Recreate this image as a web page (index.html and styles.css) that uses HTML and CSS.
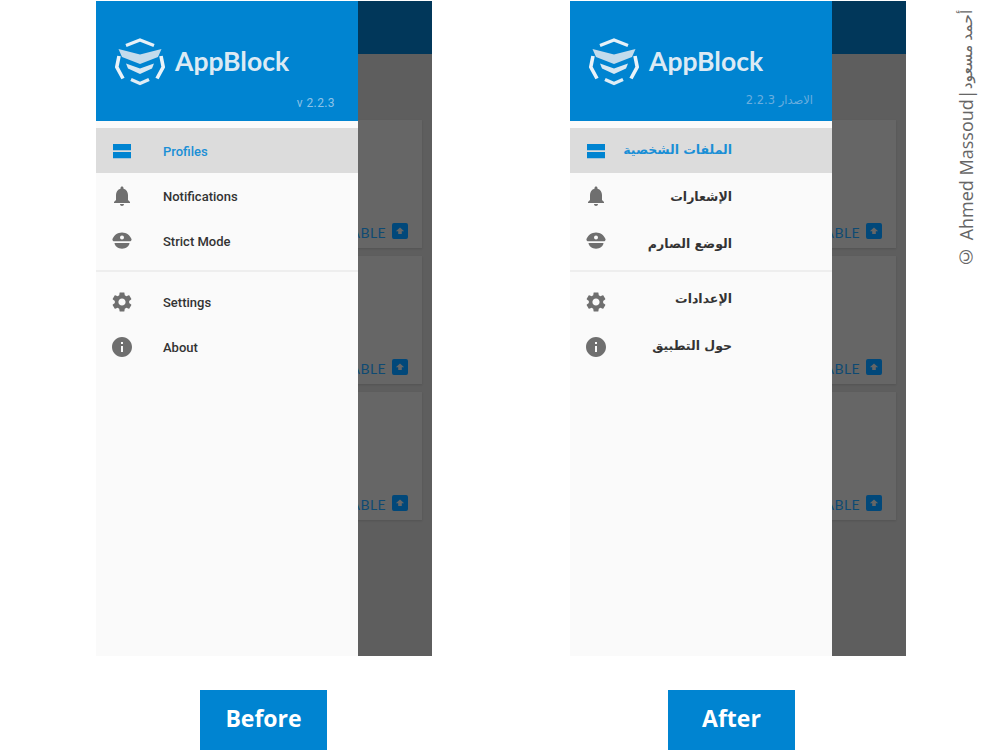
FILE: index.html
```html
<!DOCTYPE html>
<html lang="en">
<head>
    <meta charset="UTF-8">
    <title>AppBlock before and after</title>
    <link rel="stylesheet" href="styles.css">
</head>
<body>
    <svg class="icon-defs" aria-hidden="true">
        <symbol id="i-logo" viewBox="0 0 50 50">
            <path d="M11 8.500 25 3 39 8.500" fill="none" stroke="#e6f1f8" stroke-width="3.200"/>
            <path d="M3.500 12 25 17.500 46.500 12 43 20 25 27 7 20z" fill="#c3dbec"/>
            <path d="M11 26.500 25 31.500 39 26.500 37 31.500 25 37 13 31.500z" fill="#d8e8f3"/>
            <path d="M4 19 1.800 30 8 41.500" fill="none" stroke="#eaf3f9" stroke-width="3.600"/>
            <path d="M46 19 48.200 30 42 41.500" fill="none" stroke="#eaf3f9" stroke-width="3.600"/>
            <path d="M16 42.500 25 46.500 34 42.500" fill="none" stroke="#e0edf5" stroke-width="3.400"/>
        </symbol>
        <symbol id="i-profiles" viewBox="0 0 24 24">
            <path d="M3 5h18v6.200H3zM3 13.100h18v6.200H3z"/>
        </symbol>
        <symbol id="i-bell" viewBox="0 0 24 24">
            <path d="M12 22c1.100 0 2-.9 2-2h-4c0 1.100.9 2 2 2zm6-6v-5c0-3.070-1.630-5.640-4.500-6.320V4c0-.83-.67-1.500-1.500-1.500s-1.500.67-1.500 1.500v.68C7.640 5.360 6 7.920 6 11v5l-2 2v1h16v-1l-2-2z"/>
        </symbol>
        <symbol id="i-cap" viewBox="0 0 24 24">
            <path fill-rule="evenodd" d="M12 3.500c-4.500 0-8 2.800-9.500 6.500-.3 1 .2 1.900 1.200 2.300h16.600c1-.4 1.500-1.300 1.200-2.300C20 6.300 16.500 3.500 12 3.500zm0 2.900a2 2 0 1 1 0 4 2 2 0 0 1 0-4z"/>
            <path d="M4.500 14h15c-.3 3.200-3.500 5.700-7.500 5.700S4.800 17.200 4.500 14z"/>
        </symbol>
        <symbol id="i-gear" viewBox="0 0 24 24">
            <path d="M19.140 12.940c.04-.3.06-.61.06-.94 0-.32-.02-.64-.07-.94l2.030-1.580c.18-.14.23-.41.12-.61l-1.920-3.320c-.12-.22-.37-.29-.59-.22l-2.390.96c-.5-.38-1.030-.7-1.620-.94l-.36-2.540c-.04-.24-.24-.41-.48-.41h-3.840c-.24 0-.43.17-.47.41l-.36 2.540c-.59.24-1.130.57-1.620.94l-2.390-.96c-.22-.08-.47 0-.59.22L2.740 8.870c-.12.21-.08.47.12.61l2.030 1.580c-.05.3-.09.63-.09.94s.02.64.07.94l-2.030 1.580c-.18.14-.23.41-.12.61l1.920 3.320c.12.22.37.29.59.22l2.390-.96c.5.38 1.030.7 1.620.94l.36 2.540c.05.24.24.41.48.41h3.840c.24 0 .44-.17.47-.41l.36-2.540c.59-.24 1.130-.56 1.620-.94l2.390.96c.22.08.47 0 .59-.22l1.920-3.320c.12-.22.07-.47-.12-.61l-2.010-1.580zM12 15.600c-1.980 0-3.600-1.620-3.600-3.600s1.620-3.600 3.600-3.600 3.600 1.620 3.600 3.600-1.620 3.600-3.600 3.600z"/>
        </symbol>
        <symbol id="i-info" viewBox="0 0 24 24">
            <path d="M12 2C6.480 2 2 6.480 2 12s4.480 10 10 10 10-4.480 10-10S17.520 2 12 2zm1 15h-2v-6h2v6zm0-8h-2V7h2v2z"/>
        </symbol>
        <symbol id="i-enable" viewBox="0 0 16 16">
            <path d="M2 0h12a2 2 0 0 1 2 2v12a2 2 0 0 1-2 2H2a2 2 0 0 1-2-2V2a2 2 0 0 1 2-2zm6 4.500L3.800 8.300h2.400V11h3.600V8.300h2.400z" fill-rule="evenodd"/>
        </symbol>
    </svg>

    <div class="page">
        <!-- before -->
        <section class="column">
            <div class="phone">
                <div class="app-bar"></div>
                <div class="card-list">
                    <div class="card"><span class="card-action">ENABLE</span><svg class="card-icon"><use href="#i-enable"/></svg></div>
                    <div class="card"><span class="card-action">ENABLE</span><svg class="card-icon"><use href="#i-enable"/></svg></div>
                    <div class="card"><span class="card-action">ENABLE</span><svg class="card-icon"><use href="#i-enable"/></svg></div>
                </div>
                <nav class="drawer">
                    <div class="drawer-head">
                        <div class="brand">
                            <svg class="brand-logo"><use href="#i-logo"/></svg>
                            <span class="brand-name">AppBlock</span>
                        </div>
                        <div class="version">v 2.2.3</div>
                    </div>
                    <ul class="menu">
                        <li class="menu-item active"><svg class="menu-icon"><use href="#i-profiles"/></svg><span class="menu-label">Profiles</span></li>
                        <li class="menu-item"><svg class="menu-icon"><use href="#i-bell"/></svg><span class="menu-label">Notifications</span></li>
                        <li class="menu-item"><svg class="menu-icon"><use href="#i-cap"/></svg><span class="menu-label">Strict Mode</span></li>
                    </ul>
                    <ul class="menu menu-second">
                        <li class="menu-item"><svg class="menu-icon"><use href="#i-gear"/></svg><span class="menu-label">Settings</span></li>
                        <li class="menu-item"><svg class="menu-icon"><use href="#i-info"/></svg><span class="menu-label">About</span></li>
                    </ul>
                </nav>
            </div>
            <div class="tag tag-before">Before</div>
        </section>

        <!-- after -->
        <section class="column column-after">
            <div class="phone">
                <div class="app-bar"></div>
                <div class="card-list">
                    <div class="card"><span class="card-action">ENABLE</span><svg class="card-icon"><use href="#i-enable"/></svg></div>
                    <div class="card"><span class="card-action">ENABLE</span><svg class="card-icon"><use href="#i-enable"/></svg></div>
                    <div class="card"><span class="card-action">ENABLE</span><svg class="card-icon"><use href="#i-enable"/></svg></div>
                </div>
                <nav class="drawer drawer-ar">
                    <div class="drawer-head">
                        <div class="brand">
                            <svg class="brand-logo"><use href="#i-logo"/></svg>
                            <span class="brand-name">AppBlock</span>
                        </div>
                        <div class="version" dir="rtl">الاصدار 2.2.3</div>
                    </div>
                    <ul class="menu">
                        <li class="menu-item active"><svg class="menu-icon"><use href="#i-profiles"/></svg><span class="menu-label label-up" dir="rtl">الملفات الشخصية</span></li>
                        <li class="menu-item"><svg class="menu-icon"><use href="#i-bell"/></svg><span class="menu-label" dir="rtl">الإشعارات</span></li>
                        <li class="menu-item"><svg class="menu-icon"><use href="#i-cap"/></svg><span class="menu-label label-down" dir="rtl">الوضع الصارم</span></li>
                    </ul>
                    <ul class="menu menu-second">
                        <li class="menu-item"><svg class="menu-icon"><use href="#i-gear"/></svg><span class="menu-label label-up-more" dir="rtl">الإعدادات</span></li>
                        <li class="menu-item"><svg class="menu-icon"><use href="#i-info"/></svg><span class="menu-label label-up-mid" dir="rtl">حول التطبيق</span></li>
                    </ul>
                </nav>
            </div>
            <div class="tag tag-after">After</div>
        </section>

        <div class="credit">© Ahmed Massoud|<span class="credit-ar">أحمد مسعود</span></div>
    </div>
</body>
</html>
```

FILE: styles.css
```css
* {
    box-sizing: border-box;
}

html, body {
    margin: 0;
    height: 750px;
    overflow: hidden;
    background-color: #fff;
}

body {
    font-family: "Roboto", "DejaVu Sans", sans-serif;
}

.icon-defs {
    display: none;
}

.page {
    display: flex;
    padding: 1px 0 0 96px;
}

.column {
    width: 336px;
}

.column-after {
    margin-left: 138px;
}

.phone {
    position: relative;
    height: 655px;
    overflow: hidden;
    background-color: #5e5e5e;
}

.app-bar {
    height: 53px;
    background-color: #01375a;
}

.card-list {
    display: flex;
    flex-direction: column;
    gap: 8px;
    padding: 66px 10px 0 0;
}

.card {
    display: flex;
    align-items: flex-end;
    justify-content: flex-end;
    gap: 6px;
    height: 128px;
    padding: 0 14px 9px 0;
    background-color: #666;
    box-shadow: 0 1px 2px rgba(0,0,0,0.12);
}

.card-action {
    margin-bottom: -3px;
    font-family: "Lato", sans-serif;
    font-size: 14px;
    line-height: 18px;
    letter-spacing: 0.4px;
    color: #0e4a73;
}

.card-icon {
    width: 16px;
    height: 16px;
    fill: #01487a;
}

.drawer {
    position: absolute;
    top: 0;
    left: 0;
    bottom: 0;
    width: 262px;
    background-color: #fafafa;
}

.drawer-head {
    height: 120px;
    padding: 36px 23px 0 19px;
    background-color: #0084d1;
}

.brand {
    display: flex;
    align-items: center;
    gap: 10px;
}

.brand-logo {
    width: 50px;
    height: 50px;
    flex: none;
}

.brand-name {
    margin-top: -3px;
    font-family: "Lato", sans-serif;
    font-weight: 700;
    font-size: 26.5px;
    line-height: 50px;
    color: #dceaf4;
}

.version {
    margin-top: 8px;
    font-size: 12px;
    line-height: 16px;
    letter-spacing: 0.4px;
    text-align: right;
    color: #8cc3e8;
}

.menu {
    list-style: none;
    margin: 0;
    padding: 7px 0;
}

.menu-second {
    padding-top: 7px;
    border-top: 2px solid #eee;
}

.menu-item {
    display: flex;
    align-items: center;
    height: 45px;
    padding-left: 14px;
}

.menu-item.active {
    background-color: #dcdcdc;
}

.menu-icon {
    width: 24px;
    height: 24px;
    flex: none;
    fill: #6f6f6f;
}

.menu-label {
    margin-left: 29px;
    padding-top: 2px;
    font-weight: 500;
    font-size: 13px;
    color: #333;
}

.active .menu-icon {
    fill: #0084d1;
}

.active .menu-label {
    color: #1a8fd6;
}

/* arabic labels end 100px from the drawer's right edge */
.drawer-ar .menu-label {
    width: 124px;
    margin-left: 0;
    font-family: "DejaVu Sans", sans-serif;
    font-weight: 700;
    font-size: 12.5px;
    white-space: nowrap;
}

/* the arabic rows don't sit on the row centres in the screenshot */
.drawer-ar .label-up {
    padding-bottom: 5px;
}

.drawer-ar .label-up-mid {
    padding-bottom: 4px;
}

.drawer-ar .label-up-more {
    padding-bottom: 8px;
}

.drawer-ar .label-down {
    padding-top: 6px;
}

.drawer-ar .version {
    margin-top: 5px;
    margin-right: -4px;
    font-family: "DejaVu Sans", sans-serif;
    font-size: 11.5px;
    letter-spacing: 0;
    color: #6aaede;
}

.tag {
    width: 127px;
    height: 60px;
    margin-top: 34px;
    font-family: "Open Sans", sans-serif;
    font-weight: 700;
    font-size: 23px;
    line-height: 56px;
    text-align: center;
    color: #fff;
    background-color: #0084d1;
}

.tag-before {
    margin-left: 104px;
}

.tag-after {
    margin-left: 98px;
}

.credit {
    margin: 8px 0 0 52px;
    height: 260px;
    writing-mode: vertical-rl;
    transform: rotate(180deg);
    font-family: "Open Sans", "DejaVu Sans", sans-serif;
    font-size: 18px;
    line-height: 16px;
    white-space: nowrap;
    color: #666;
}

.credit-ar {
    font-size: 15.5px;
}
```
